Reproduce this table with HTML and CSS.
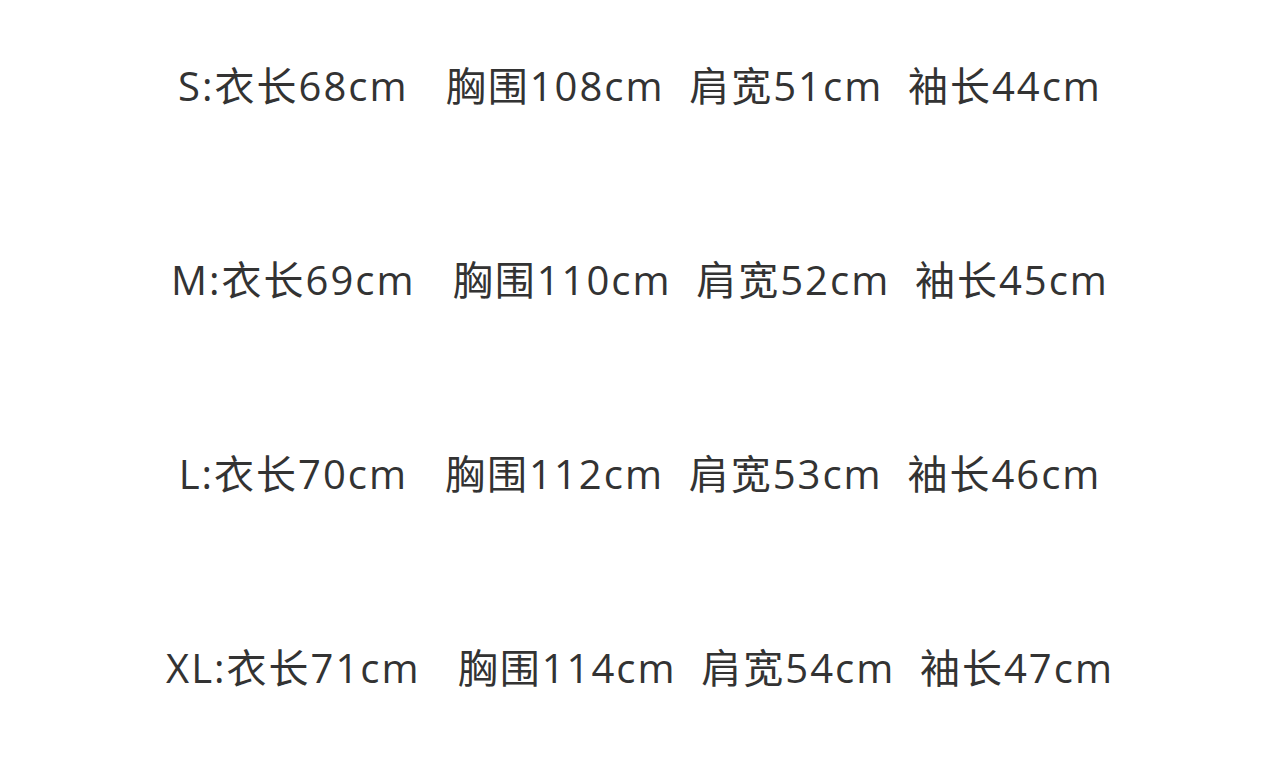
FILE: index.html
```html
<!DOCTYPE html>
<html lang="zh-CN">
<head>
    <meta charset="UTF-8">
    <meta name="viewport" content="width=device-width, initial-scale=1.0">
    <title>尺码表</title>
    <link rel="stylesheet" href="styles.css">
</head>
<body>
    <div class="size-list">
        <p class="size-row">S:衣长68cm   胸围108cm  肩宽51cm  袖长44cm</p>
        <p class="size-row">M:衣长69cm   胸围110cm  肩宽52cm  袖长45cm</p>
        <p class="size-row">L:衣长70cm   胸围112cm  肩宽53cm  袖长46cm</p>
        <p class="size-row">XL:衣长71cm   胸围114cm  肩宽54cm  袖长47cm</p>
    </div>
</body>
</html>
```

FILE: styles.css
```css
body {
    margin: 0;
    background: #fff;
    font-family: "Open Sans", "Noto Sans CJK SC", sans-serif;
    color: #333;
}
.size-list {
    display: flex;
    flex-direction: column;
    align-items: center;
    gap: 134px;
    padding-top: 56px;
}
.size-row {
    margin: 0;
    font-size: 40px;
    line-height: 60px;
    letter-spacing: 2px;
    white-space: pre;
}
```
